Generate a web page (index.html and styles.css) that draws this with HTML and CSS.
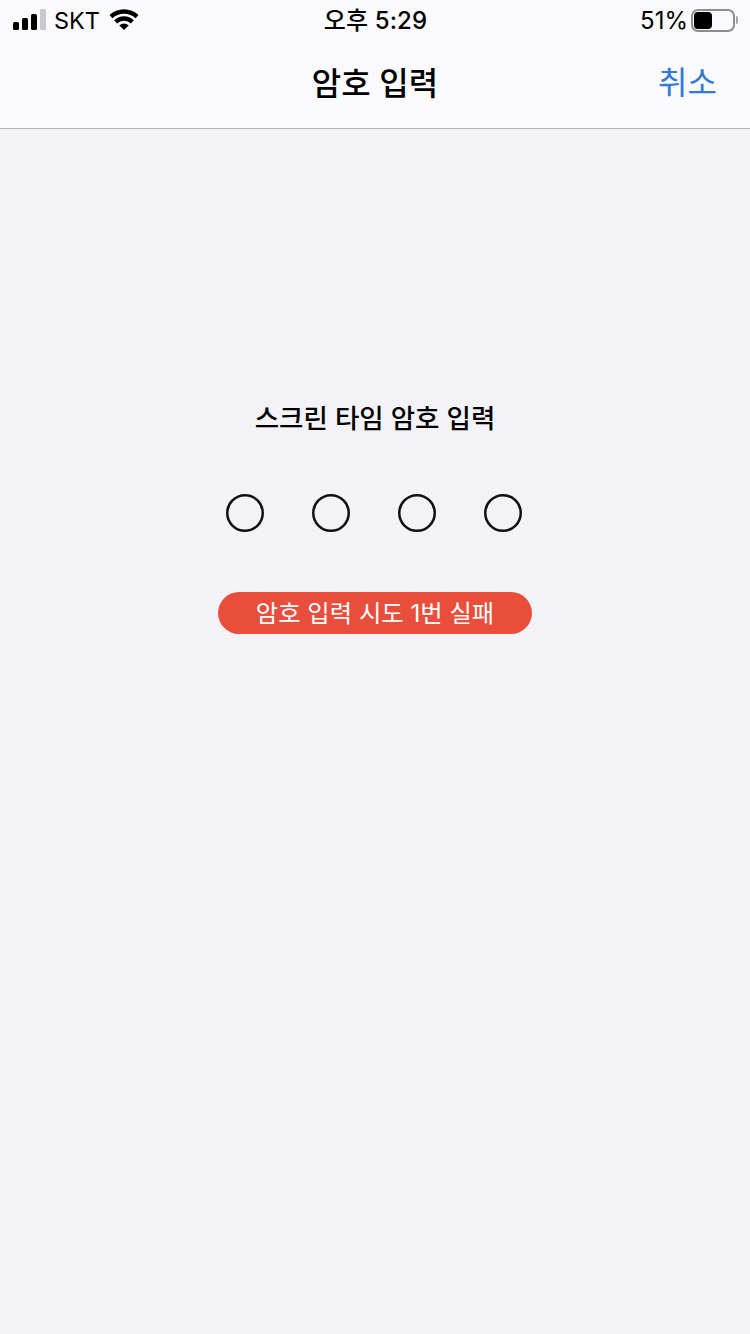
FILE: index.html
```html
<!DOCTYPE html>
<html lang="ko">
<head>
    <meta charset="UTF-8">
    <meta name="viewport" content="width=device-width, initial-scale=1.0">
    <title>암호 입력</title>
    <link rel="stylesheet" href="styles.css">
</head>
<body>
    <header class="top-bar">
        <div class="status-bar">
            <div class="status-left">
                <svg class="signal" width="33" height="21" viewBox="0 0 33 21">
                    <rect x="0" y="13" width="6" height="8" rx="1.5" fill="#000"/>
                    <rect x="9" y="9" width="6" height="12" rx="1.5" fill="#000"/>
                    <rect x="18" y="5" width="6" height="16" rx="1.5" fill="#000"/>
                    <rect x="27" y="0" width="6" height="21" rx="1.5" fill="#c9c9cc"/>
                </svg>
                <span class="carrier">SKT</span>
                <svg class="wifi" width="30" height="22" viewBox="0 0 30 22">
                    <path d="M0.5 7 A21 21 0 0 1 29.5 7 L26.6 10.2 A17 17 0 0 0 3.4 10.2 Z" fill="#000"/>
                    <path d="M5.2 12.2 A14 14 0 0 1 24.8 12.2 L21.9 15.4 A10 10 0 0 0 8.1 15.4 Z" fill="#000"/>
                    <path d="M10.2 17.4 A7 7 0 0 1 19.8 17.4 L15 22 Z" fill="#000"/>
                </svg>
            </div>
            <div class="status-time">오후 5:29</div>
            <div class="status-right">
                <span class="battery-pct">51%</span>
                <div class="battery">
                    <div class="battery-level"></div>
                </div>
                <div class="battery-cap"></div>
            </div>
        </div>
        <div class="nav-bar">
            <h1 class="nav-title">암호 입력</h1>
            <span class="nav-cancel">취소</span>
        </div>
    </header>

    <main class="passcode">
        <h2 class="passcode-title">스크린 타임 암호 입력</h2>
        <div class="dots">
            <svg class="dot" viewBox="0 0 38 38"><circle cx="19" cy="19" r="17.75"/></svg>
            <svg class="dot" viewBox="0 0 38 38"><circle cx="19" cy="19" r="17.75"/></svg>
            <svg class="dot" viewBox="0 0 38 38"><circle cx="19" cy="19" r="17.75"/></svg>
            <svg class="dot" viewBox="0 0 38 38"><circle cx="19" cy="19" r="17.75"/></svg>
        </div>
        <div class="fail-badge">암호 입력 시도 1번 실패</div>
    </main>
</body>
</html>
```

FILE: styles.css
```css
* {
    box-sizing: border-box;
}
body {
    margin: 0;
    height: 1334px;
    overflow: hidden;
    background-color: #f2f2f7;
    color: #000;
    font-family: Inter, "Noto Sans CJK KR", sans-serif;
}
.top-bar {
    height: 129px;
    background: #fafafd;
    border-bottom: 1px solid #b2b2b6;
}
.status-bar {
    height: 40px;
    display: grid;
    grid-template-columns: 1fr auto 1fr;
    align-items: center;
    padding: 0 12px 0 13px;
}
.status-left {
    display: flex;
    align-items: center;
}
.signal {
    margin-top: -1px;
}
.carrier {
    margin-left: 8px;
    font-size: 23.5px;
    font-weight: 400;
}
.wifi {
    margin-left: 9px;
    margin-top: -3px;
}
.status-time {
    margin-bottom: 4px;
    font-size: 24px;
    font-weight: 500;
    letter-spacing: 0.1px;
}
.status-right {
    display: flex;
    align-items: center;
    justify-content: flex-end;
}
.battery-pct {
    font-size: 24px;
    font-weight: 400;
    margin-right: 3px;
}
.battery {
    width: 44px;
    height: 23px;
    padding: 1px;
    border: 2px solid #8e8e92;
    border-radius: 7px;
}
.battery-level {
    width: 18px;
    height: 100%;
    background: #000;
    border-radius: 4px;
}
.battery-cap {
    width: 2px;
    height: 8px;
    margin-left: 1px;
    background: #a5a5a8;
    border-radius: 0 2px 2px 0;
}
.nav-bar {
    height: 88px;
    display: flex;
    justify-content: center;
    align-items: center;
    position: relative;
}
.nav-title {
    margin: 0;
    font-size: 32px;
    font-weight: 500;
    line-height: 44px;
}
.nav-cancel {
    position: absolute;
    right: 33px;
    top: 21px;
    font-size: 32px;
    line-height: 44px;
    color: #3478d8;
}
.passcode {
    display: flex;
    flex-direction: column;
    align-items: center;
}
.passcode-title {
    margin: 270px 0 0;
    font-size: 26.5px;
    font-weight: 500;
    line-height: 38px;
}
.dots {
    display: flex;
    gap: 48px;
    margin: 57px 2px 0 0;
}
.dot {
    width: 38px;
    height: 38px;
    fill: none;
    stroke: #111;
    stroke-width: 2.5;
}
.fail-badge {
    width: 314px;
    height: 42px;
    margin-top: 60px;
    border-radius: 21px;
    background: #e94e3c;
    color: #fff;
    font-size: 24.3px;
    font-weight: 400;
    line-height: 42px;
    text-align: center;
}
```
